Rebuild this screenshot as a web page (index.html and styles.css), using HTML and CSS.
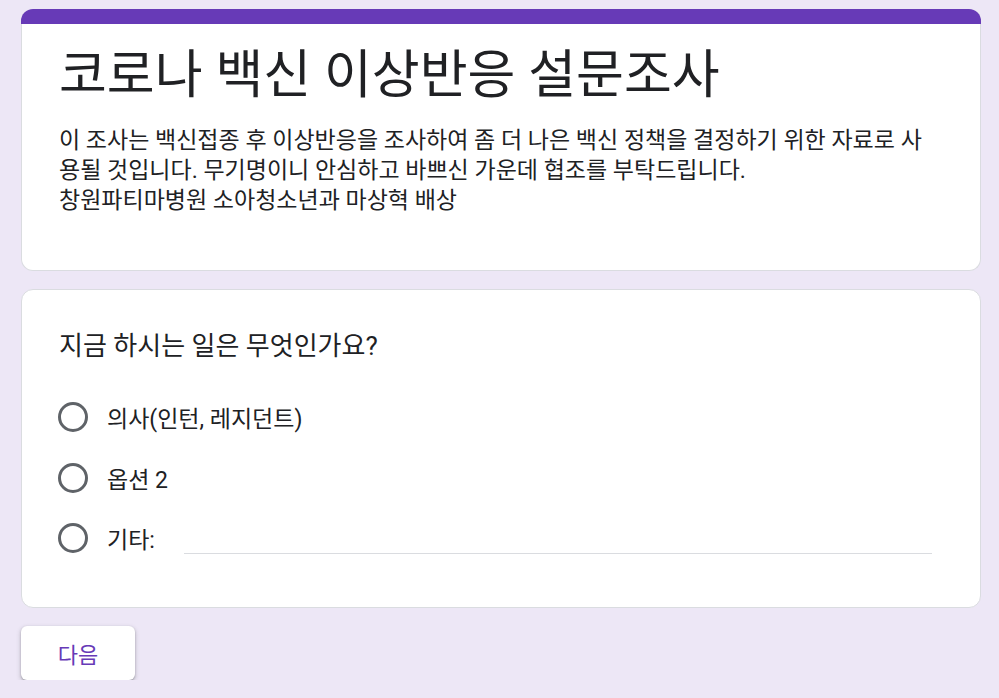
FILE: index.html
```html
<!DOCTYPE html>
<html lang="ko">
<head>
<meta charset="utf-8">
<title>코로나 백신 이상반응 설문조사</title>
<link rel="stylesheet" href="styles.css">
</head>
<body>
<main class="form">
  <section class="card header-card">
    <div class="accent"></div>
    <div class="header-body">
      <h1 class="title">코로나 백신 이상반응 설문조사</h1>
      <p class="desc">이 조사는 백신접종 후 이상반응을 조사하여 좀 더 나은 백신 정책을 결정하기 위한 자료로 사용될 것입니다. 무기명이니 안심하고 바쁘신 가운데 협조를 부탁드립니다.<br>창원파티마병원 소아청소년과 마상혁 배상</p>
    </div>
  </section>
  <section class="card question-card">
    <div class="question">지금 하시는 일은 무엇인가요?</div>
    <div class="options">
      <label class="option"><span class="radio"></span><span class="opt-text">의사(인턴, 레지던트)</span></label>
      <label class="option"><span class="radio"></span><span class="opt-text">옵션 2</span></label>
      <label class="option"><span class="radio"></span><span class="opt-text other-label">기타:</span><span class="other-line"></span></label>
    </div>
  </section>
  <div class="actions">
    <button class="next-btn" type="button">다음</button>
  </div>
</main>
</body>
</html>
```
FILE: styles.css
```css
html, body {
  margin: 0;
  padding: 0;
}
body {
  background: #ede7f6;
  font-family: Roboto, "Noto Sans CJK KR", sans-serif;
  color: #202124;
}
.form {
  width: 960px;
  margin-left: 21px;
  padding-top: 9px;
  display: flex;
  flex-direction: column;
  gap: 18px;
}
.card {
  background: #fff;
  border: 1px solid #dadce0;
  border-radius: 12px;
  box-sizing: border-box;
}
.header-card {
  border-top: 0;
}
.accent {
  height: 15px;
  margin: 0 -1px;
  background: #673ab7;
  border-radius: 12px 12px 0 0;
}
.header-body {
  padding: 20px 41px 54px 37px;
}
.title {
  margin: 0;
  font-weight: 400;
  font-size: 52px;
  line-height: 64px;
}
.desc {
  margin: 18px 0 0;
  font-size: 23px;
  line-height: 30px;
}
.question-card {
  padding: 40px 36px 54px;
}
.question {
  font-size: 26px;
  line-height: 32px;
  margin-left: 1px;
}
.options {
  margin-top: 40px;
  display: flex;
  flex-direction: column;
  gap: 30.5px;
}
.option {
  display: flex;
  align-items: center;
  height: 30px;
  font-size: 23px;
}
.radio {
  width: 24px;
  height: 24px;
  border: 3px solid #5f6368;
  border-radius: 50%;
  flex: none;
}
.opt-text {
  margin-left: 19px;
}
.other-label {
  width: 77px;
  flex: none;
}
.other-line {
  flex: 1;
  align-self: flex-end;
  height: 1px;
  margin: 0 12px -1px 0;
  background: #dadce0;
}
.actions {
  display: flex;
}
.next-btn {
  width: 114px;
  height: 54px;
  border: 0;
  border-radius: 6px;
  background: #fff;
  color: #673ab7;
  font-family: Roboto, "Noto Sans CJK KR", sans-serif;
  font-size: 22px;
  box-shadow: 0 1px 2px rgba(60,64,67,.35), 0 2px 4px 1px rgba(60,64,67,.18);
  cursor: pointer;
}
```
